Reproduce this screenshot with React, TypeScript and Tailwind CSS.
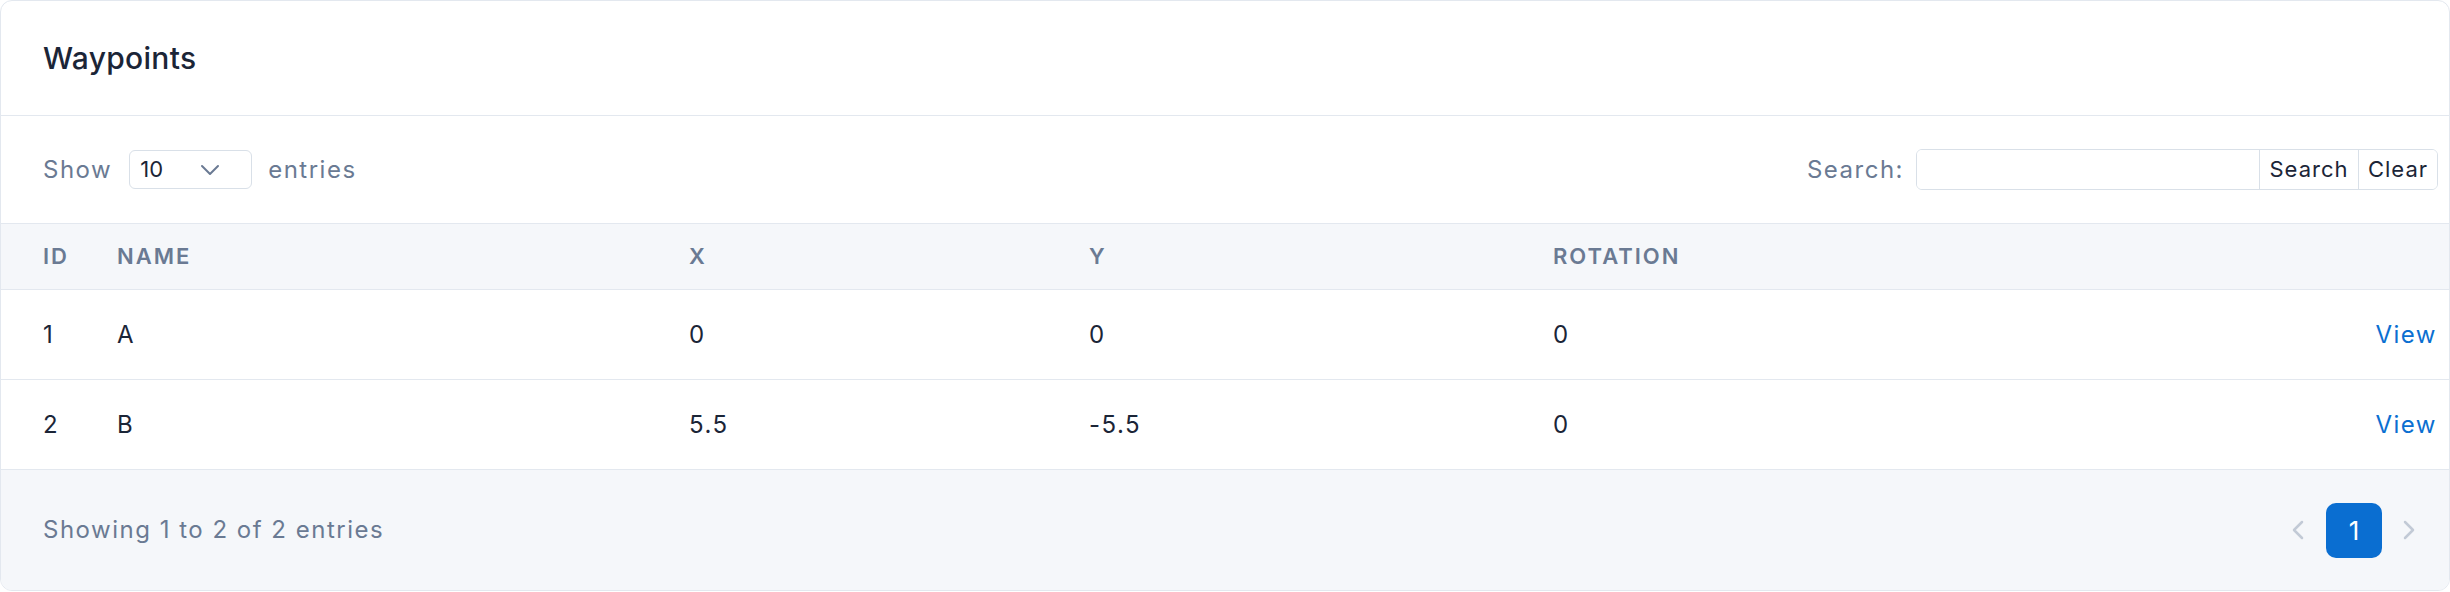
import React, { useState } from 'react';

export default function App() {
  const [query, setQuery] = useState('');

  const waypoints = [
    { id: 1, name: 'A', x: '0', y: '0', rotation: '0' },
    { id: 2, name: 'B', x: '5.5', y: '-5.5', rotation: '0' },
  ];

  return (
    <div className="bg-white w-[2450px] h-[592px] font-['Inter',sans-serif]">
      <div className="border border-[#e3e8ef] rounded-xl overflow-hidden h-[591px] flex flex-col">
        {/* Title */}
        <div className="h-[115px] flex items-center px-[42px] border-b border-[#e3e8ef] shrink-0">
          <h2 className="text-[30px] font-medium tracking-[0.3px] text-[#1b2537]">Waypoints</h2>
        </div>

        {/* Toolbar */}
        <div className="h-[107px] flex items-center justify-between pl-[42px] pr-[11px] shrink-0">
          <div className="flex items-center text-[24px] tracking-[1.5px] text-[#6a7a93]">
            <span>Show</span>
            <div className="ml-[17px] mr-[16px] w-[123px] h-[39px] border border-[#d9e0e8] rounded-md flex items-center justify-between pl-[10px] pr-[31px] text-[#1b2537] text-[22px] tracking-normal">
              <span>10</span>
              <svg width="20" height="12" viewBox="0 0 20 12" fill="none" stroke="#6a7a93" strokeWidth="2" strokeLinecap="round" strokeLinejoin="round">
                <path d="M2 2l8 8 8-8" />
              </svg>
            </div>
            <span>entries</span>
          </div>
          <div className="flex items-center">
            <span className="text-[24px] tracking-[1.5px] text-[#6a7a93] mr-[12px]">Search:</span>
            <div className="flex h-[41px] border border-[#d9e0e8] rounded-md overflow-hidden">
              <input
                type="text"
                value={query}
                onChange={(e) => setQuery(e.target.value)}
                className="w-[342px] h-full px-2 outline-none bg-white"
              />
              <button className="h-full w-[99px] border-l border-[#d9e0e8] text-[22px] tracking-[1px] text-[#1b2537] bg-white">Search</button>
              <button className="h-full w-[79px] border-l border-[#d9e0e8] text-[22px] tracking-[1px] text-[#1b2537] bg-white">Clear</button>
            </div>
          </div>
        </div>

        {/* Table */}
        <table className="w-full table-fixed border-collapse shrink-0">
          <colgroup>
            <col className="w-[116px]" />
            <col className="w-[572px]" />
            <col className="w-[400px]" />
            <col className="w-[464px]" />
            <col className="w-[600px]" />
            <col />
          </colgroup>
          <thead>
            <tr className="h-[66px] bg-[#f5f7fa] border-y border-[#e3e8ef] text-left text-[22px] font-semibold tracking-[2px] text-[#6a7a93]">
              <th className="pl-[42px] font-semibold">ID</th>
              <th className="font-semibold">NAME</th>
              <th className="font-semibold">X</th>
              <th className="font-semibold">Y</th>
              <th className="font-semibold">ROTATION</th>
              <th></th>
            </tr>
          </thead>
          <tbody>
            {waypoints.map((w) => (
              <tr key={w.id} className="h-[90px] border-b border-[#e3e8ef] text-[24px] tracking-[1.5px] text-[#1b2537]">
                <td className="pl-[42px]">{w.id}</td>
                <td>{w.name}</td>
                <td>{w.x}</td>
                <td>{w.y}</td>
                <td>{w.rotation}</td>
                <td className="text-right pr-[12px]">
                  <a className="text-[#0b6fd1] cursor-pointer">View</a>
                </td>
              </tr>
            ))}
          </tbody>
        </table>

        {/* Footer */}
        <div className="flex-1 bg-[#f5f7fa] flex items-center justify-between pl-[42px] pr-[28px]">
          <span className="text-[24px] tracking-[1.5px] text-[#6a7a93]">Showing 1 to 2 of 2 entries</span>
          <div className="flex items-center">
            <button className="w-[24px] flex justify-center">
              <svg width="12" height="20" viewBox="0 0 12 20" fill="none" stroke="#c2cad6" strokeWidth="2.5" strokeLinecap="round" strokeLinejoin="round">
                <path d="M10 2L2 10l8 8" />
              </svg>
            </button>
            <button className="ml-[16px] w-[56px] h-[55px] rounded-[10px] bg-[#0a6ed1] text-white text-[26px]">1</button>
            <button className="ml-[15px] w-[24px] flex justify-center">
              <svg width="12" height="20" viewBox="0 0 12 20" fill="none" stroke="#c2cad6" strokeWidth="2.5" strokeLinecap="round" strokeLinejoin="round">
                <path d="M2 2l8 8-8 8" />
              </svg>
            </button>
          </div>
        </div>
      </div>
    </div>
  );
}
